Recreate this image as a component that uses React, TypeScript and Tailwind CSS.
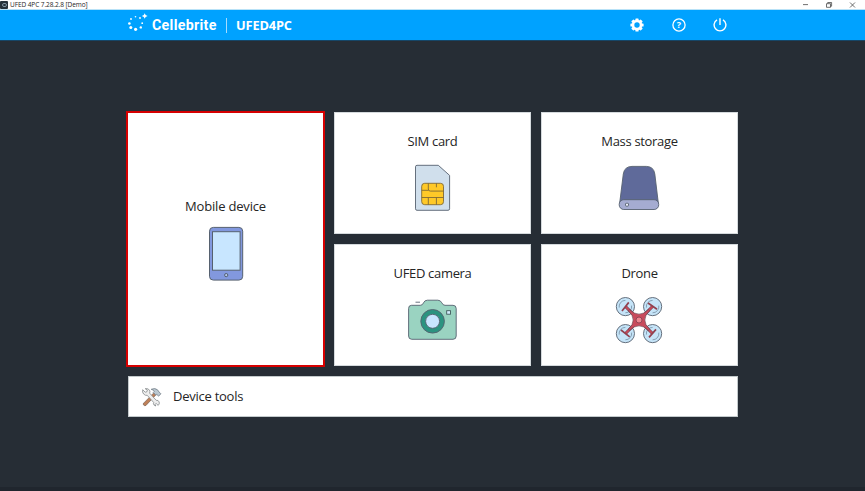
import type { ReactNode } from "react";

const stroke = "#56616f";

function BrandMark() {
  const dots: [number, number, number][] = [
    [129.4, 23.5, 1.3], [131, 19, 0.9], [135.5, 16.8, 0.8], [140, 18, 0.9],
    [142.2, 23.2, 0.9], [140.8, 27.4, 1.2], [135.6, 29.3, 1.6], [130.8, 27.6, 1.5],
  ];
  return (
    <svg className="block h-[20px] w-[22px]" viewBox="127 13 22 20" fill="white">
      {dots.map(([x, y, r]) => <circle key={`${x}-${y}`} cx={x} cy={y} r={r} />)}
      <path d="M144.7 13.2L145.6 15.1L147.6 16L145.6 16.9L144.7 18.8L143.8 16.9L141.8 16L143.8 15.1Z" />
    </svg>
  );
}

function Gear() {
  return (
    <svg className="block size-[14px]" viewBox="-7 -7 14 14">
      <g fill="white">
        {[0, 45, 90, 135].map((a) => (
          <rect key={a} className="origin-[0_0]" x="-1.6" y="-6.6" width="3.2" height="13.2" rx=".6" transform={`rotate(${a})`} />
        ))}
        <circle r="5.2" />
      </g>
      <circle r="2.7" fill="#00a2ff" />
    </svg>
  );
}

function Help() {
  return (
    <svg className="block size-[14px]" viewBox="-7 -7 14 14">
      <circle r="6.1" fill="none" stroke="white" strokeWidth="1.3" />
      <text y="3.2" textAnchor="middle" fontSize="9" fontWeight="700" fill="white">?</text>
    </svg>
  );
}

function Power() {
  return (
    <svg className="block size-[14px]" viewBox="-7 -7 14 14" fill="none" stroke="white" strokeWidth="1.4">
      <path d="M-3 -5.1A5.9 5.9 0 1 0 3 -5.1M0 -6.8V0" />
    </svg>
  );
}

function Phone() {
  return (
    <svg className="block h-[55px] w-[36px]" viewBox="208 226 36 55" stroke={stroke}>
      <rect x="209.5" y="227.4" width="33.2" height="52.7" rx="3.8" fill="#8298de" />
      <rect x="212.5" y="231.7" width="27.6" height="38.5" fill="#c8e6ff" />
      <circle cx="226.2" cy="275.1" r="1.6" fill="#b5c9ef" />
    </svg>
  );
}

function Sim() {
  return (
    <svg className="block h-[48px] w-[38px]" viewBox="414 164 38 48" stroke={stroke} strokeWidth=".9">
      <path d="M417 165.3H438.3L449.6 175.4V208.8Q449.6 210.3 448 210.3H417Q415.5 210.3 415.5 208.8V166.8Q415.5 165.3 417 165.3Z" fill="#d0dfec" />
      <rect x="421.7" y="183.3" width="21.8" height="21.4" rx="3" fill="#ffc928" stroke="#806a36" />
      <path d="M421.7 190.3H428.5M421.7 197.5H443.5M428.3 183.3V189Q428.3 191.1 430.4 191.1H443.5M436.4 183.3V187.3M428.3 197.5V204.7M436.4 197.5V204.7" fill="none" stroke="#806a36" />
    </svg>
  );
}

function Storage() {
  return (
    <svg className="mr-[2px] block h-[46px] w-[42px]" viewBox="618 165 42 46" stroke={stroke} strokeWidth=".9">
      <path d="M619.7 203L623.3 174Q624.5 166.4 632 166.4H646.3Q653.7 166.4 654.8 174L658.3 203Z" fill="#5f6a9a" />
      <rect x="619.2" y="199.7" width="39.5" height="9.8" rx="4.6" fill="#a5acd1" />
      <rect x="625.5" y="203.3" width="3" height="2.8" rx=".7" fill="#eef0fb" />
    </svg>
  );
}

function Camera() {
  return (
    <svg className="mr-[2px] block h-[44px] w-[50px]" viewBox="407 298 50 44" stroke={stroke} strokeWidth=".9">
      <path d="M411.5 305.3H420.3Q422.6 305.3 423.5 302.8Q424.6 300.2 427.4 300.2H437.8Q440.6 300.2 441.8 302.8Q442.9 305.3 445 305.3H453Q456.2 305.3 456.2 308.5V336Q456.2 339.3 453 339.3H411.8Q408.6 339.3 408.6 336V308.5Q408.6 305.3 411.5 305.3Z" fill="#9ad3c1" />
      <path d="M415.5 302.2H420" />
      <circle cx="432.6" cy="321.3" r="11.8" fill="#2b9380" />
      <circle cx="432.6" cy="321.3" r="7" fill="#c8e6ff" />
      <rect x="446.7" y="310.7" width="3.8" height="3.5" fill="#d5eeff" stroke="#405a5b" />
    </svg>
  );
}

function Drone() {
  const rotors = [[-13.6, -13.4], [13.6, -13.4], [-13.6, 13.6], [13.6, 13.6]];
  return (
    <svg className="mr-[1px] block size-[48px]" viewBox="-24 -24 48 48" stroke={stroke} strokeWidth=".9">
      {rotors.map(([x, y]) => (
        <g key={`${x}${y}`} transform={`translate(${x} ${y})`} fill="none">
          <circle r="9.1" fill="#c5e4f8" />
          <path d="M-6.2 1A6.2 6.2 0 0 1 0-6.2M6.2-1A6.2 6.2 0 0 1 0 6.2" stroke="#6a8297" strokeWidth=".7" />
        </g>
      ))}
      <path d="M-13.5 -13.5L-4 -4M13.5 -13.5L4 -4M-13.5 13.5L-4 4M13.5 13.5L4 4" stroke="#70444f" strokeWidth="3" />
      <path d="M-13.5 -13.5L-4 -4M13.5 -13.5L4 -4M-13.5 13.5L-4 4M13.5 13.5L4 4" stroke="#c64a5c" strokeWidth="2" />
      <path d="M-17 -9L-10.2 -17.6M9 -17L18 -10.8M-18 10L-9.3 16.8M10 17.4L17 9.4" stroke="#91414f" strokeWidth="1.7" />
      <path d="M-9.5 -10.5Q-5 -5.8 0 -5.8Q5 -5.8 9.5 -10.5L10.7 -9.2Q5.8 -5 5.8 0Q5.8 5 10.7 9.2L9.5 10.5Q5 5.8 0 5.8Q-5 5.8 -9.5 10.5L-10.7 9.2Q-5.8 5 -5.8 0Q-5.8 -5 -10.7 -9.2Z" fill="#c84b5c" stroke="#70444f" strokeWidth=".7" />
      <circle r="3" fill="#ef8790" stroke="#894452" />
    </svg>
  );
}

function Tools() {
  return (
    <svg className="block size-[20px]" viewBox="142 386 20 20" strokeLinejoin="round">
      <path d="M143.6 402.2L153.8 391.9L155.8 393.9L145.9 404.5Q144.6 405 143.7 404.1Q142.9 403.1 143.6 402.2Z" fill="#bf8058" stroke="#796052" strokeWidth=".7" />
      <path d="M151.2 388.3Q155 386.6 157.5 388.8L159.1 391L160.9 392.8L158.6 395.2L156.7 393.3L155.9 394.2L153.2 391.4L154.4 390.2Q153.3 388.9 151.2 388.3Z" fill="#bbc8d1" stroke="#66717b" strokeWidth=".7" />
      <path d="M142.7 388.7L145.2 391.2L147 390.7L147.3 388.9L145.2 387.7Q148 387 149.6 389.2Q150.3 390.8 149.6 392.1L156.2 399.3Q158.4 398.9 159.2 401Q159.8 403 158.2 404.4L156.2 402.5L154.8 403.6L156 405Q153.8 404.7 153.4 402.8L153.7 401.5L147.3 394.4Q145.1 394.7 143.6 393Q142 391.2 142.7 388.7Z" fill="#eeeeee" stroke="#777c80" strokeWidth=".7" />
    </svg>
  );
}

function Tile({ label, children }: { label: string; children: ReactNode }) {
  return (
    <button className="flex h-[122px] w-[197px] flex-col items-center border border-[#d5dadd] bg-white">
      <span className="mt-[18px] h-5 text-[13px] leading-5 tracking-[-0.32px] whitespace-nowrap">{label}</span>
      <div className="mt-[2px] flex h-[70px] items-center justify-center">{children}</div>
    </button>
  );
}

export default function App() {
  return (
    <div className="flex h-[491px] w-[865px] flex-col overflow-hidden bg-[#262d35] font-['Open_Sans','Noto_Sans',sans-serif] text-[#252525]">
      <div className="flex h-[10px] items-center border-b border-[#b9e2f7] bg-white">
        <div className="flex size-[8px] shrink-0 items-center justify-center rounded-[1px] bg-[#26323b]">
          <span className="h-[4px] w-[5px] rounded-[2px] border border-[#8296a3]" />
        </div>
        <span className="-mt-px ml-[2px] text-[6.5px] leading-[9px] tracking-[-0.08px] whitespace-nowrap">UFED 4PC 7.28.2.8 [Demo]</span>
        <svg className="ml-auto block h-[8px] w-[62px]" viewBox="803 0 62 8" fill="none" stroke="#4b4b4b" strokeWidth=".8">
          <path d="M803 3.6H808M826.5 2.7H830.5V6.3H826.5ZM827.7 2.5V1.5H831.6V5.2H830.5M850 1.5L855 6.5M855 1.5L850 6.5" />
        </svg>
      </div>
      <header className="flex h-[31px] shrink-0 items-center border-b border-[#164667] bg-[#00a2ff] pl-[127px] text-white">
        <div className="-mt-[4px]"><BrandMark /></div>
        <span className="ml-[3px] w-[65px] font-['Roboto',sans-serif] text-[14.2px] leading-5 font-bold tracking-[0.32px] whitespace-nowrap">Cellebrite</span>
        <span className="ml-[9px] h-[15px] w-px bg-[#a6dcff]" />
        <span className="ml-[9px] w-[58px] text-[12.8px] leading-5 font-bold tracking-[-0.15px] whitespace-nowrap">UFED4PC</span>
        <div className="ml-[336px] flex items-center">
          <Gear />
          <div className="ml-[28px]"><Help /></div>
          <div className="ml-[27px]"><Power /></div>
        </div>
      </header>
      <main className="grow pt-[71px] pl-[128px]">
        <div className="flex h-[254px]">
          <button className="-mt-px -ml-[2px] flex h-[256px] w-[199px] flex-col items-center border-2 border-[#d60000] bg-white">
            <span className="mt-[83px] h-5 text-[13px] leading-5 tracking-[-0.18px] whitespace-nowrap">Mobile device</span>
            <div className="mt-[10px]"><Phone /></div>
          </button>
          <div className="ml-[9px] flex w-[404px] flex-wrap content-between justify-between">
            <Tile label="SIM card"><Sim /></Tile>
            <Tile label="Mass storage"><Storage /></Tile>
            <Tile label="UFED camera"><Camera /></Tile>
            <Tile label="Drone"><Drone /></Tile>
          </div>
        </div>
        <button className="mt-[10px] flex h-[41px] w-[610px] items-center border border-[#c3cacc] bg-white pl-[13px]">
          <Tools />
          <span className="-mt-[2px] ml-[11px] text-[13px] leading-5 tracking-[-0.25px] whitespace-nowrap">Device tools</span>
        </button>
      </main>
      <footer className="h-[4px] shrink-0 bg-[#20262e]" />
    </div>
  );
}
